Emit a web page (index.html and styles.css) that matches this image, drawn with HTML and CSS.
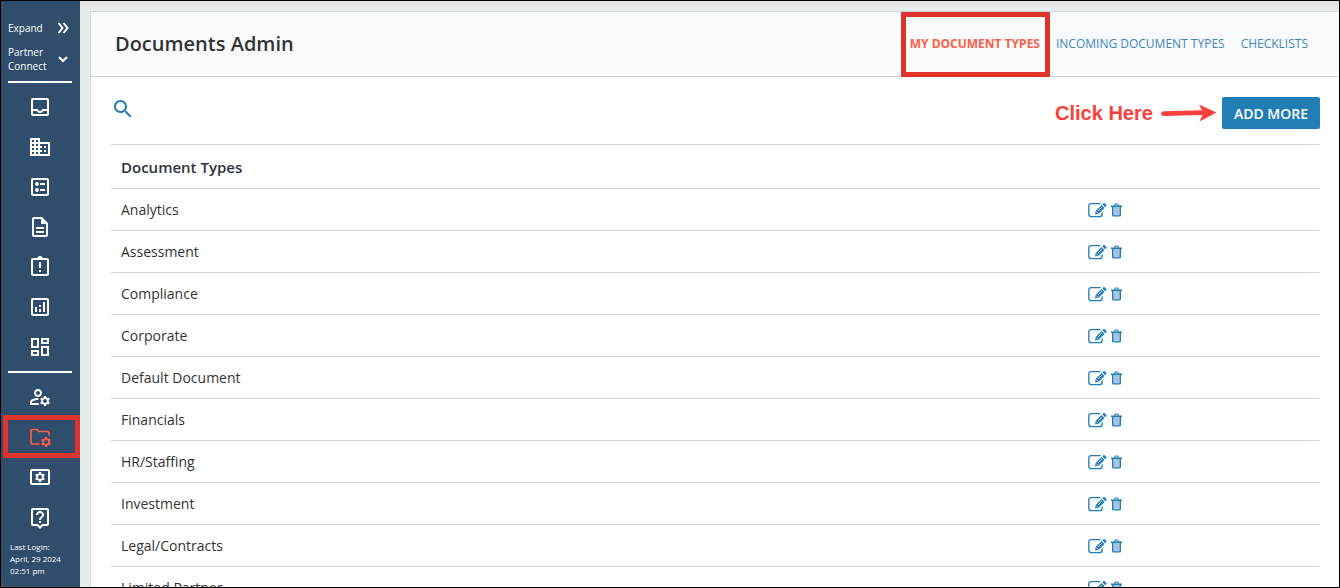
FILE: index.html
```html
<!DOCTYPE html>
<html lang="en">
<head>
    <meta charset="UTF-8">
    <title>Documents Admin</title>
    <link rel="stylesheet" href="styles.css">
</head>
<body>

<!-- Shared icons -->
<svg class="sprite" aria-hidden="true">
    <symbol id="gear" viewBox="0 0 24 24">
        <path d="M20.75 16c0-.22-.03-.42-.06-.63l1.14-1.01-1-1.73-1.45.49c-.32-.27-.68-.48-1.08-.63L18 11h-2l-.3 1.49c-.4.15-.76.36-1.08.63l-1.45-.49-1 1.73 1.14 1.01c-.03.21-.06.41-.06.63s.03.42.06.63l-1.14 1.01 1 1.73 1.45-.49c.32.27.68.48 1.08.63L16 21h2l.3-1.49c.4-.15.76-.36 1.08-.63l1.45.49 1-1.73-1.14-1.01c.03-.21.06-.41.06-.63zM17 18c-1.1 0-2-.9-2-2s.9-2 2-2 2 .9 2 2-.9 2-2 2z"/>
    </symbol>
    <symbol id="edit" viewBox="0 0 19 16">
        <path d="M12.500 1.700H3.500Q.8 1.700.8 4.300V12Q.8 14.700 3.500 14.700H11.500Q14.200 14.700 14.200 12V10.500" fill="none" stroke="currentColor" stroke-width="1.300"/>
        <path d="M7 12.500l.7-3.600 5.900-5.900 2.900 2.900-5.900 5.900zM14.300 2.300l1-1q.7-.6 1.400 0l1.500 1.500q.6.700 0 1.400l-1 1z"/>
        <path d="M8.300 9.700l1.500 1.500M10 9l3.800-3.800" stroke="#fff" stroke-width=".8"/>
    </symbol>
    <symbol id="trash" viewBox="0 0 11 14">
        <path d="M1.700 4h7.600v8.300H1.700z" fill="#a3c6de"/>
        <path d="M0 2.500h3L3.600.9Q3.800.5 4.300.5h2.400q.5 0 .7.400L8 2.500h3V4h-1v8q0 1.500-1.500 1.500h-6Q1 13.500 1 12V4H0zM4.200 2.500h2.600l-.4-.9H4.600zM2.300 4v8.200h6.400V4z" fill-rule="evenodd"/>
    </symbol>
</svg>

<aside class="sidebar">
    <button class="toggle">
        <span>Expand</span>
        <svg class="chevron" viewBox="0 0 12 12"><path d="M1.500 1l4 5-4 5M6.500 1l4 5-4 5"/></svg>
    </button>
    <button class="toggle partner">
        <span>Partner Connect</span>
        <svg class="chevron" viewBox="0 0 12 12"><path d="M2 4l4 4 4-4"/></svg>
    </button>

    <nav class="menu">
        <a href="#" aria-label="Inbox"><svg viewBox="0 0 24 24"><path d="M19 3H5c-1.100 0-2 .9-2 2v14c0 1.100.9 2 2 2h14c1.100 0 2-.9 2-2V5c0-1.100-.9-2-2-2zm0 16H5v-3h3.560c.69 1.190 1.970 2 3.450 2s2.750-.81 3.450-2H19v3zm0-5h-4.990c0 1.100-.9 2-2 2s-2-.9-2-2H5V5h14v9z"/></svg></a>
        <a href="#" aria-label="Companies"><svg viewBox="0 0 24 24"><path d="M12 7V3H2v18h20V7H12zM6 19H4v-2h2v2zm0-4H4v-2h2v2zm0-4H4V9h2v2zm0-4H4V5h2v2zm4 12H8v-2h2v2zm0-4H8v-2h2v2zm0-4H8V9h2v2zm0-4H8V5h2v2zm10 12h-8v-2h2v-2h-2v-2h2v-2h-2V9h8v10zm-2-8h-2v2h2v-2zm0 4h-2v2h2v-2z"/></svg></a>
        <a href="#" aria-label="Lists"><svg viewBox="0 0 24 24"><path d="M19 3H5c-1.100 0-2 .9-2 2v14c0 1.100.9 2 2 2h14c1.100 0 2-.9 2-2V5c0-1.100-.9-2-2-2zm0 16H5V5h14v14zM12 8h5v2h-5zM12 14h5v2h-5z"/><circle cx="9" cy="9" r="1.900"/><circle cx="9" cy="15" r="1.900"/></svg></a>
        <a href="#" aria-label="Documents"><svg viewBox="0 0 24 24"><path d="M8 16h8v2H8zm0-4h8v2H8zm6-10H6c-1.100 0-2 .9-2 2v16c0 1.100.89 2 1.990 2H18c1.100 0 2-.9 2-2V8l-6-6zm4 18H6V4h7v5h5v11z"/></svg></a>
        <a href="#" aria-label="Tasks"><svg viewBox="0 0 24 24"><path d="M19 3h-4.180C14.400 1.840 13.300 1 12 1s-2.400.84-2.820 2H5c-1.100 0-2 .9-2 2v14c0 1.100.9 2 2 2h14c1.100 0 2-.9 2-2V5c0-1.100-.9-2-2-2zm0 16H5V5h14v14zM11 7h2v6h-2zM11 15h2v2h-2z"/></svg></a>
        <a href="#" aria-label="Analytics"><svg viewBox="0 0 24 24"><path d="M19 3H5c-1.100 0-2 .9-2 2v14c0 1.100.9 2 2 2h14c1.100 0 2-.9 2-2V5c0-1.100-.9-2-2-2zm0 16H5V5h14v14zM7 12h2v5H7zM15 7h2v10h-2zM11 14h2v3h-2zM11 10h2v2h-2z"/></svg></a>
        <a href="#" aria-label="Dashboard"><svg viewBox="0 0 24 24"><path d="M19 5v2h-4V5h4M9 5v6H5V5h4m10 8v6h-4v-6h4M9 17v2H5v-2h4M21 3h-8v6h8V3zM11 3H3v10h8V3zm10 8h-8v10h8V11zm-10 4H3v6h8v-6z"/></svg></a>
    </nav>

    <nav class="menu">
        <a href="#" aria-label="User admin"><svg viewBox="0 0 24 24"><path d="M4 18v-.65c0-.34.16-.66.41-.81C6.100 15.530 8.030 15 10 15c.03 0 .05 0 .08.01.1-.7.3-1.370.59-1.980-.22-.02-.44-.03-.67-.03-2.420 0-4.680.67-6.610 1.820-.88.52-1.390 1.500-1.390 2.530V20h9.260c-.42-.6-.75-1.280-.97-2H4zM10 12c2.210 0 4-1.790 4-4s-1.790-4-4-4-4 1.790-4 4 1.790 4 4 4zm0-6c1.100 0 2 .9 2 2s-.9 2-2 2-2-.9-2-2 .9-2 2-2z"/><use href="#gear" width="24" height="24"/></svg></a>
        <a href="#" class="active" aria-label="Documents admin"><svg viewBox="0 0 24 24"><path d="M11.500 19H4.500Q3 19 3 17.500V6Q3 4.500 4.500 4.500H9L11 6.500H19.500Q21 6.500 21 8V10.500" fill="none" stroke="currentColor" stroke-width="1.700"/><use href="#gear" x="1" y="1" width="24" height="24"/></svg></a>
        <a href="#" aria-label="Settings"><svg viewBox="0 0 24 24"><path d="M20 4H4c-1.100 0-2 .9-2 2v12c0 1.100.9 2 2 2h16c1.100 0 2-.9 2-2V6c0-1.100-.9-2-2-2zm0 14H4V6h16v12z"/><use href="#gear" x="-5" y="-4" width="24" height="24"/></svg></a>
        <a href="#" aria-label="Help"><svg viewBox="0 -1 24 24"><path d="M19 2H5c-1.110 0-2 .9-2 2v14c0 1.100.89 2 2 2h4l3 3 3-3h4c1.100 0 2-.9 2-2V4c0-1.100-.9-2-2-2zm0 16h-4.830l-.59.59L12 20.170l-1.590-1.590-.58-.58H5V4h14v14zm-8-3h2v2h-2zm1-8c1.100 0 2 .9 2 2 0 2-3 1.750-3 5h2c0-2.250 3-2.500 3-5 0-2.210-1.790-4-4-4s-4 1.790-4 4h2c0-1.100.9-2 2-2z"/></svg></a>
    </nav>

    <p class="last-login">Last Login:<br>April, 29 2024<br>02:51 pm</p>
</aside>

<main class="main">
    <section class="card">
        <header class="card-header">
            <h1>Documents Admin</h1>
            <nav class="tabs">
                <a href="#" class="active">MY DOCUMENT TYPES</a>
                <a href="#">INCOMING DOCUMENT TYPES</a>
                <a href="#">CHECKLISTS</a>
            </nav>
        </header>

        <div class="card-body">
            <div class="toolbar">
                <button class="search" aria-label="Search">
                    <svg viewBox="0 0 24 24"><path d="M15.500 14h-.79l-.28-.27C15.410 12.590 16 11.110 16 9.500 16 5.910 13.090 3 9.500 3S3 5.910 3 9.500 5.910 16 9.500 16c1.610 0 3.090-.59 4.230-1.570l.27.28v.79l5 4.990L20.490 19l-4.990-5zm-6 0C7.010 14 5 11.990 5 9.500S7.010 5 9.500 5 14 7.010 14 9.500 11.990 14 9.500 14z"/></svg>
                </button>
                <div class="hint">
                    <span>Click Here</span>
                    <svg viewBox="0 0 56 18"><path d="M2.500 7.300L41 6.300 38 .5 55.500 8.500 38.500 17.500 41.500 11 2.500 12Q0 11.800 0 9.600 0 7.600 2.500 7.300z"/></svg>
                </div>
                <button class="add">ADD MORE</button>
            </div>

            <table class="types">
                <thead>
                    <tr><th>Document Types</th><th></th></tr>
                </thead>
                <tbody id="rows"></tbody>
            </table>
        </div>
    </section>
</main>

<script>
    const types = ['Analytics', 'Assessment', 'Compliance', 'Corporate', 'Default Document',
        'Financials', 'HR/Staffing', 'Investment', 'Legal/Contracts', 'Limited Partner'];

    document.getElementById('rows').innerHTML = types.map(name => `
        <tr>
            <td>${name}</td>
            <td>
                <div class="actions">
                    <button aria-label="Edit ${name}"><svg class="edit"><use href="#edit"/></svg></button>
                    <button aria-label="Delete ${name}"><svg class="trash"><use href="#trash"/></svg></button>
                </div>
            </td>
        </tr>`).join('');
</script>

</body>
</html>
```
FILE: styles.css
```css
* {
    box-sizing: border-box;
}

body {
    margin: 0;
    height: 100vh;
    display: flex;
    overflow: hidden;
    border: 1px solid #000;
    background: #55585b;
    color: #333;
    font-family: "Open Sans", "Noto Sans", sans-serif;
    font-size: 14px;
}

a {
    text-decoration: none;
}

button {
    padding: 0;
    border: 0;
    background: none;
    color: inherit;
    font: inherit;
    cursor: pointer;
}

svg {
    display: block;
    fill: currentColor;
}

.sprite {
    position: absolute;
    width: 0;
    height: 0;
}

/* Sidebar */
.sidebar {
    flex: none;
    width: 79px;
    padding: 20px 8px 0 7px;
    background: #304e6c;
    color: #fff;
    border-bottom-left-radius: 8px;
    overflow: hidden;
}

.toggle {
    display: flex;
    justify-content: space-between;
    align-items: center;
    width: 100%;
    padding-right: 3px;
    font-size: 10px;
    line-height: 14px;
    text-align: left;
}

.partner {
    margin: 10px 0 8px;
}

.partner span {
    width: 44px;
}

.chevron {
    width: 12px;
    height: 12px;
    fill: none;
    stroke: #fff;
    stroke-width: 2;
}

.menu {
    padding: 4px 0;
    border-top: 2px solid #fff;
}

.menu a {
    display: flex;
    justify-content: center;
    align-items: center;
    height: 40px;
    color: #fff;
}

.menu svg {
    width: 24px;
    height: 24px;
}

.menu .active {
    position: relative;
    color: #ff5c45;
}

/* Red frames around the highlighted links */
.menu .active::after,
.tabs .active::after {
    content: "";
    position: absolute;
    border: 5px solid #e0332e;
    pointer-events: none;
}

.menu .active::after {
    inset: -2px -8px -1px -5px;
}

.last-login {
    margin: 0 0 0 2px;
    font-size: 8px;
    line-height: 12px;
}

/* Content */
.main {
    flex: 1;
    min-width: 0;
    padding: 10px 0 0 10px;
    background: linear-gradient(#e4e1e5, #e6ebee 8px);
}

.card {
    height: 100%;
    overflow: hidden;
    border: 1px solid #d0dbe0;
    border-width: 1px 0 0 1px;
    background: #fff;
}

.card-header {
    display: flex;
    justify-content: space-between;
    height: 65px;
    padding: 0 23px 0 24px;
    border-bottom: 1px solid #d0dbe0;
    background: #fafbfd;
}

h1 {
    margin: 0;
    font-size: 20px;
    font-weight: 600;
    line-height: 64px;
}

.tabs {
    display: flex;
}

.tabs a {
    position: relative;
    padding: 0 8px;
    color: #3a87b7;
    font-size: 12px;
    line-height: 64px;
}

.tabs .active {
    color: #ff5c45;
    font-weight: 700;
}

.tabs .active::after {
    inset: 0 -2px -1px -1px;
}

.card-body {
    padding: 20px 19px 0 20px;
}

.toolbar {
    display: flex;
    align-items: center;
    margin-bottom: 15px;
}

.search {
    align-self: flex-start;
    margin-right: auto;
    color: #207eb5;
}

.search svg {
    width: 24px;
    height: 24px;
}

.hint {
    display: flex;
    align-items: center;
    gap: 8px;
    margin-right: 5px;
    color: #fd403c;
    font: bold 20px "Liberation Sans", Arial, sans-serif;
}

.hint svg {
    width: 56px;
    height: 18px;
}

.add {
    height: 32px;
    padding: 0 12px;
    border-radius: 2px;
    background: #207eb5;
    color: #fff;
    font-weight: 600;
}

.types {
    width: 100%;
    table-layout: fixed;
    border-collapse: collapse;
    border-top: 1px solid #d0dbe0;
}

.types th,
.types td {
    height: 42px;
    padding: 0 10px;
    border-bottom: 1px solid #d0dbe0;
    text-align: left;
}

.types th {
    height: 44px;
    color: #2b3340;
    font-size: 15px;
    font-weight: 600;
}

.types th:first-child {
    width: 80%;
}

.actions {
    display: flex;
    align-items: center;
    gap: 4px;
    color: #207eb5;
}

.edit {
    width: 19px;
    height: 16px;
}

.trash {
    width: 11px;
    height: 14px;
}
```
